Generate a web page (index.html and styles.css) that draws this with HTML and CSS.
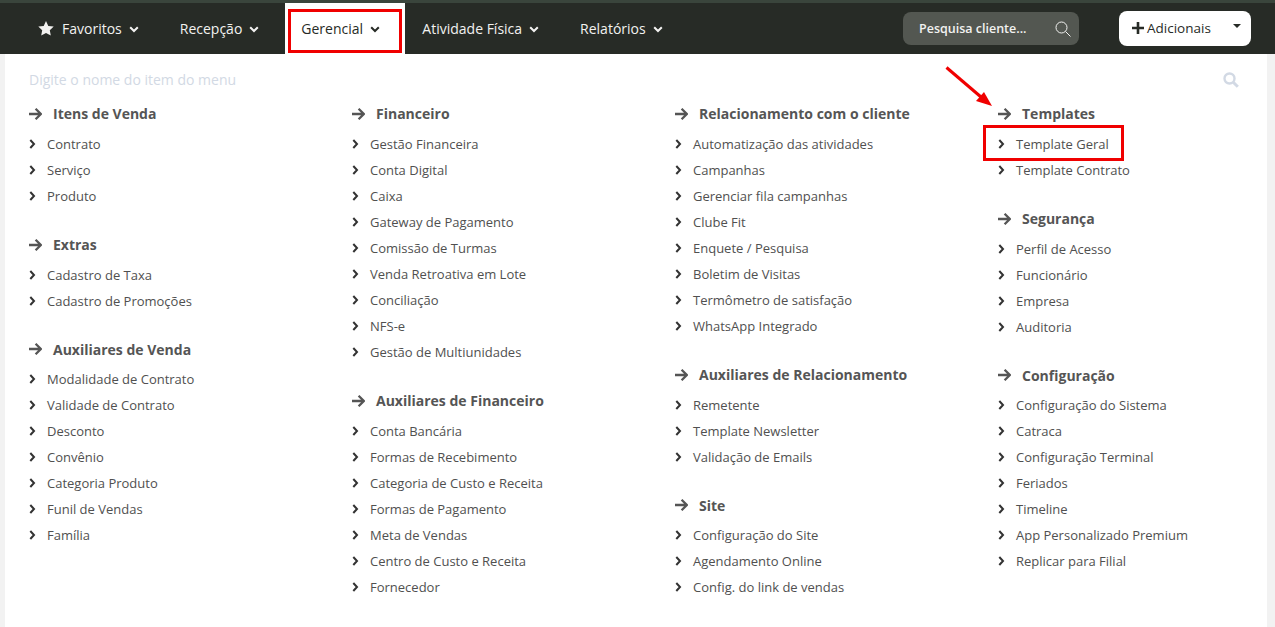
FILE: index.html
```html
<!DOCTYPE html>
<html lang="en">

<head>
  <meta charset="UTF-8">
  <title>Menu Gerencial</title>
  <link rel="stylesheet" href="styles.css">
</head>

<body>
  <svg class="sprites" width="0" height="0">
    <symbol id="chev-down" viewBox="0 0 10 7"><path d="M1.2 1.2 5 5l3.8-3.8" fill="none" stroke="currentColor" stroke-width="2"/></symbol>
    <symbol id="chev-right" viewBox="0 0 7 10"><path d="M1.3 1 5 5 1.3 9" fill="none" stroke="currentColor" stroke-width="2"/></symbol>
    <symbol id="arrow" viewBox="0 0 13 12"><path d="M0 6h11.5M6.6 .8l5.2 5.2-5.2 5.2" fill="none" stroke="currentColor" stroke-width="2.3"/></symbol>
  </svg>

  <nav id="topbar">
    <a class="nav-item nav-favoritos">
      <svg class="star" viewBox="0 0 16 15"><path d="M8 0l2.3 4.9 5.4.7-3.9 3.7 1 5.3L8 12l-4.8 2.6 1-5.3L.3 5.6l5.4-.7z" fill="currentColor"/></svg>
      Favoritos <svg class="chev"><use href="#chev-down"/></svg>
    </a>
    <a class="nav-item nav-recepcao">Recepção <svg class="chev"><use href="#chev-down"/></svg></a>
    <a class="nav-item nav-gerencial"><span class="nav-mark">Gerencial <svg class="chev"><use href="#chev-down"/></svg></span></a>
    <a class="nav-item nav-atividade">Atividade Física <svg class="chev"><use href="#chev-down"/></svg></a>
    <a class="nav-item nav-relatorios">Relatórios <svg class="chev"><use href="#chev-down"/></svg></a>

    <div class="client-search">
      <span>Pesquisa cliente...</span>
      <svg viewBox="0 0 16 16"><circle cx="6.5" cy="6.5" r="5.5" fill="none" stroke="currentColor"/><path d="M10.5 10.5l5 5" stroke="currentColor"/></svg>
    </div>
    <div class="add-button">
      <svg class="plus" viewBox="0 0 12 12"><path d="M6 0v12M0 6h12" stroke="currentColor" stroke-width="2.6"/></svg>
      <span>Adicionais</span>
      <i class="caret"></i>
    </div>
  </nav>

  <main id="panel">
    <div class="menu-search">
      <span>Digite o nome do item do menu</span>
      <svg viewBox="0 0 16 16"><circle cx="6.5" cy="6.5" r="5" fill="none" stroke="currentColor" stroke-width="2.4"/><path d="M10.5 10.5l4.3 4.3" stroke="currentColor" stroke-width="3"/></svg>
    </div>

    <div class="columns">
      <div class="column">
        <section>
          <h2><svg><use href="#arrow"/></svg>Itens de Venda</h2>
          <ul>
            <li><svg><use href="#chev-right"/></svg>Contrato</li>
            <li><svg><use href="#chev-right"/></svg>Serviço</li>
            <li><svg><use href="#chev-right"/></svg>Produto</li>
          </ul>
        </section>
        <section>
          <h2><svg><use href="#arrow"/></svg>Extras</h2>
          <ul>
            <li><svg><use href="#chev-right"/></svg>Cadastro de Taxa</li>
            <li><svg><use href="#chev-right"/></svg>Cadastro de Promoções</li>
          </ul>
        </section>
        <section>
          <h2><svg><use href="#arrow"/></svg>Auxiliares de Venda</h2>
          <ul>
            <li><svg><use href="#chev-right"/></svg>Modalidade de Contrato</li>
            <li><svg><use href="#chev-right"/></svg>Validade de Contrato</li>
            <li><svg><use href="#chev-right"/></svg>Desconto</li>
            <li><svg><use href="#chev-right"/></svg>Convênio</li>
            <li><svg><use href="#chev-right"/></svg>Categoria Produto</li>
            <li><svg><use href="#chev-right"/></svg>Funil de Vendas</li>
            <li><svg><use href="#chev-right"/></svg>Família</li>
          </ul>
        </section>
      </div>

      <div class="column">
        <section>
          <h2><svg><use href="#arrow"/></svg>Financeiro</h2>
          <ul>
            <li><svg><use href="#chev-right"/></svg>Gestão Financeira</li>
            <li><svg><use href="#chev-right"/></svg>Conta Digital</li>
            <li><svg><use href="#chev-right"/></svg>Caixa</li>
            <li><svg><use href="#chev-right"/></svg>Gateway de Pagamento</li>
            <li><svg><use href="#chev-right"/></svg>Comissão de Turmas</li>
            <li><svg><use href="#chev-right"/></svg>Venda Retroativa em Lote</li>
            <li><svg><use href="#chev-right"/></svg>Conciliação</li>
            <li><svg><use href="#chev-right"/></svg>NFS-e</li>
            <li><svg><use href="#chev-right"/></svg>Gestão de Multiunidades</li>
          </ul>
        </section>
        <section>
          <h2><svg><use href="#arrow"/></svg>Auxiliares de Financeiro</h2>
          <ul>
            <li><svg><use href="#chev-right"/></svg>Conta Bancária</li>
            <li><svg><use href="#chev-right"/></svg>Formas de Recebimento</li>
            <li><svg><use href="#chev-right"/></svg>Categoria de Custo e Receita</li>
            <li><svg><use href="#chev-right"/></svg>Formas de Pagamento</li>
            <li><svg><use href="#chev-right"/></svg>Meta de Vendas</li>
            <li><svg><use href="#chev-right"/></svg>Centro de Custo e Receita</li>
            <li><svg><use href="#chev-right"/></svg>Fornecedor</li>
          </ul>
        </section>
      </div>

      <div class="column">
        <section>
          <h2><svg><use href="#arrow"/></svg>Relacionamento com o cliente</h2>
          <ul>
            <li><svg><use href="#chev-right"/></svg>Automatização das atividades</li>
            <li><svg><use href="#chev-right"/></svg>Campanhas</li>
            <li><svg><use href="#chev-right"/></svg>Gerenciar fila campanhas</li>
            <li><svg><use href="#chev-right"/></svg>Clube Fit</li>
            <li><svg><use href="#chev-right"/></svg>Enquete / Pesquisa</li>
            <li><svg><use href="#chev-right"/></svg>Boletim de Visitas</li>
            <li><svg><use href="#chev-right"/></svg>Termômetro de satisfação</li>
            <li><svg><use href="#chev-right"/></svg>WhatsApp Integrado</li>
          </ul>
        </section>
        <section>
          <h2><svg><use href="#arrow"/></svg>Auxiliares de Relacionamento</h2>
          <ul>
            <li><svg><use href="#chev-right"/></svg>Remetente</li>
            <li><svg><use href="#chev-right"/></svg>Template Newsletter</li>
            <li><svg><use href="#chev-right"/></svg>Validação de Emails</li>
          </ul>
        </section>
        <section>
          <h2><svg><use href="#arrow"/></svg>Site</h2>
          <ul>
            <li><svg><use href="#chev-right"/></svg>Configuração do Site</li>
            <li><svg><use href="#chev-right"/></svg>Agendamento Online</li>
            <li><svg><use href="#chev-right"/></svg>Config. do link de vendas</li>
          </ul>
        </section>
      </div>

      <div class="column">
        <section>
          <h2><svg><use href="#arrow"/></svg>Templates</h2>
          <ul>
            <li class="marked"><svg><use href="#chev-right"/></svg>Template Geral</li>
            <li><svg><use href="#chev-right"/></svg>Template Contrato</li>
          </ul>
        </section>
        <section>
          <h2><svg><use href="#arrow"/></svg>Segurança</h2>
          <ul>
            <li><svg><use href="#chev-right"/></svg>Perfil de Acesso</li>
            <li><svg><use href="#chev-right"/></svg>Funcionário</li>
            <li><svg><use href="#chev-right"/></svg>Empresa</li>
            <li><svg><use href="#chev-right"/></svg>Auditoria</li>
          </ul>
        </section>
        <section>
          <h2><svg><use href="#arrow"/></svg>Configuração</h2>
          <ul>
            <li><svg><use href="#chev-right"/></svg>Configuração do Sistema</li>
            <li><svg><use href="#chev-right"/></svg>Catraca</li>
            <li><svg><use href="#chev-right"/></svg>Configuração Terminal</li>
            <li><svg><use href="#chev-right"/></svg>Feriados</li>
            <li><svg><use href="#chev-right"/></svg>Timeline</li>
            <li><svg><use href="#chev-right"/></svg>App Personalizado Premium</li>
            <li><svg><use href="#chev-right"/></svg>Replicar para Filial</li>
          </ul>
        </section>
      </div>
    </div>
  </main>

  <!-- annotation arrow pointing at Templates -->
  <svg class="red-arrow" viewBox="0 0 50 42"><path d="M1.5 1.5 36 31" stroke="#f00000" stroke-width="3"/><path d="M47 40 31 35 39 26z" fill="#f00000"/></svg>
</body>

</html>
```

FILE: styles.css
```css
html, body {
  margin: 0;
  height: 100%;
  overflow: hidden;
}
body {
  position: relative;
  background-color: #f2f2f2;
  font-family: "Open Sans", sans-serif;
  font-size: 13px;
  color: #505050;
}
.sprites {
  position: absolute;
}

/* top bar */
#topbar {
  display: flex;
  align-items: center;
  height: 51px;
  border-top: 3px solid #3a453c;
  background-color: #272b26;
  color: #f2f2f0;
  font-size: 14px;
}
.nav-item {
  display: flex;
  align-items: center;
  white-space: nowrap;
}
.chev {
  width: 10px;
  height: 7px;
  margin-left: 7px;
  margin-top: 1px;
}
.star {
  width: 16px;
  height: 15px;
  margin-right: 8px;
}
.nav-favoritos {
  margin-left: 38px;
}
.nav-recepcao {
  margin-left: 41px;
}
.nav-gerencial {
  align-self: stretch;
  margin-left: 26px;
  width: 120px;
  padding: 0 3px;
  box-sizing: border-box;
  background-color: #fff;
  color: #272b26;
}
.nav-mark {
  display: flex;
  align-items: center;
  width: 100%;
  height: 44px;
  margin-top: 5px;
  padding: 0 0 5px 10px;
  box-sizing: border-box;
  border: 3px solid #f00000;
}
.nav-atividade {
  margin-left: 17px;
}
.nav-relatorios {
  margin-left: 41px;
}
.client-search {
  display: flex;
  align-items: center;
  justify-content: space-between;
  width: 176px;
  height: 33px;
  margin-left: auto;
  padding: 0 8px 0 16px;
  box-sizing: border-box;
  border-radius: 8px;
  background-color: #535751;
  font-size: 12.5px;
  font-weight: 600;
}
.client-search svg {
  width: 16px;
  height: 16px;
}
.add-button {
  display: flex;
  align-items: center;
  width: 132px;
  height: 35px;
  margin: 0 24px 0 40px;
  padding: 0 10px 2px 13px;
  box-sizing: border-box;
  border-radius: 8px;
  background-color: #fff;
  color: #272b26;
  font-size: 13.5px;
}
.plus {
  width: 12px;
  height: 12px;
  margin-right: 3px;
}
.caret {
  margin-left: auto;
  margin-bottom: 3px;
  border-top: 4px solid #272b26;
  border-left: 4px solid transparent;
  border-right: 4px solid transparent;
}

/* menu panel */
#panel {
  height: 573px;
  margin: 0 8px 0 5px;
  padding: 0 28px 0 24px;
  box-sizing: border-box;
  background-color: #fff;
}
.menu-search {
  display: flex;
  align-items: center;
  justify-content: space-between;
  height: 47px;
  padding-top: 2px;
  color: #d2d9e4;
  font-size: 14px;
}
.menu-search svg {
  width: 16px;
  height: 16px;
}
.columns {
  display: grid;
  grid-template-columns: repeat(4, 323px);
}
section {
  margin-bottom: 24.6px;
}
h2 {
  display: flex;
  align-items: center;
  height: 20px;
  margin: 0;
  padding-top: 0.93px;
  font-size: 14px;
  font-weight: 700;
  color: #555;
}
h2 svg {
  width: 13px;
  height: 12px;
  margin-right: 11px;
}
ul {
  list-style: none;
  margin: 7.07px 0 0;
  padding: 0;
}
li {
  display: flex;
  align-items: center;
  height: 26px;
}
li svg {
  width: 7px;
  height: 10px;
  margin: 0 11px 0 0;
  color: #333;
}
.marked {
  position: relative;
}
/* red highlight box from the annotation */
.marked::after {
  content: "";
  position: absolute;
  left: -15px;
  top: -6px;
  width: 135px;
  height: 30px;
  border: 3px solid #f00000;
}
.red-arrow {
  position: absolute;
  left: 945px;
  top: 66px;
  width: 50px;
  height: 42px;
}
```
